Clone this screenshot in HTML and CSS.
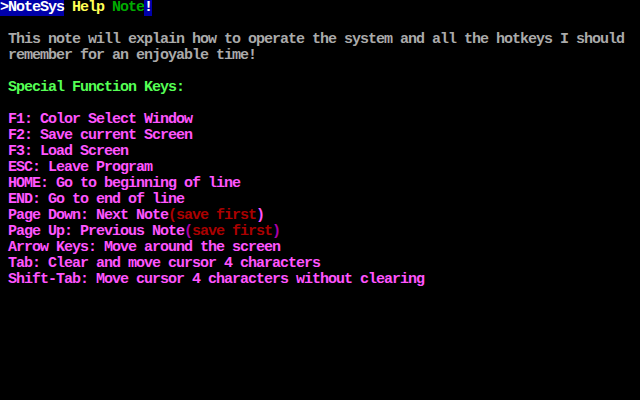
FILE: index.html
```html
<!DOCTYPE html>
<html>
<head>
<meta charset="utf-8">
<link rel="stylesheet" href="styles.css">
</head>
<body>
<pre class="screen"><span class="bar">&gt;NoteSys</span><span class="yel"> Help </span><span class="grn">Note</span><span class="bar">!</span>

<span class="gry"> This note will explain how to operate the system and all the hotkeys I should</span>
<span class="gry"> remember for an enjoyable time!</span>

<span class="lgr"> Special Function Keys:</span>

<span class="mag"> F1: Color Select Window</span>
<span class="mag"> F2: Save current Screen</span>
<span class="mag"> F3: Load Screen</span>
<span class="mag"> ESC: Leave Program</span>
<span class="mag"> HOME: Go to beginning of line</span>
<span class="mag"> END: Go to end of line</span>
<span class="mag"> Page Down: Next Note</span><span class="red">(save first</span><span class="mag">)</span>
<span class="mag"> Page Up: Previous Note</span><span class="dmg">(</span><span class="red">save first</span><span class="dmg">)</span>
<span class="mag"> Arrow Keys: Move around the screen</span>
<span class="mag"> Tab: Clear and move cursor 4 characters</span>
<span class="mag"> Shift-Tab: Move cursor 4 characters without clearing</span>
</pre>
</body>
</html>
```
FILE: styles.css
```css
html, body {
  margin: 0;
  padding: 0;
  background: #000;
  width: 640px;
  height: 400px;
  overflow: hidden;
}
.screen {
  margin: 0;
  font-family: "Liberation Mono", "DejaVu Sans Mono", monospace;
  font-weight: bold;
  font-size: 15px;
  letter-spacing: -1px;
  line-height: 16px;
  white-space: pre;
  color: #AAAAAA;
}
.bar {
  display: inline-block;
  vertical-align: top;
  height: 16px;
  background: #0000AA;
  color: #FFFFFF;
}
.yel { color: #FFFF55; }
.grn { color: #00AA00; }
.gry { color: #AAAAAA; }
.lgr { color: #55FF55; }
.mag { color: #FF55FF; }
.red { color: #AA0000; }
.dmg { color: #AA00AA; }
```
